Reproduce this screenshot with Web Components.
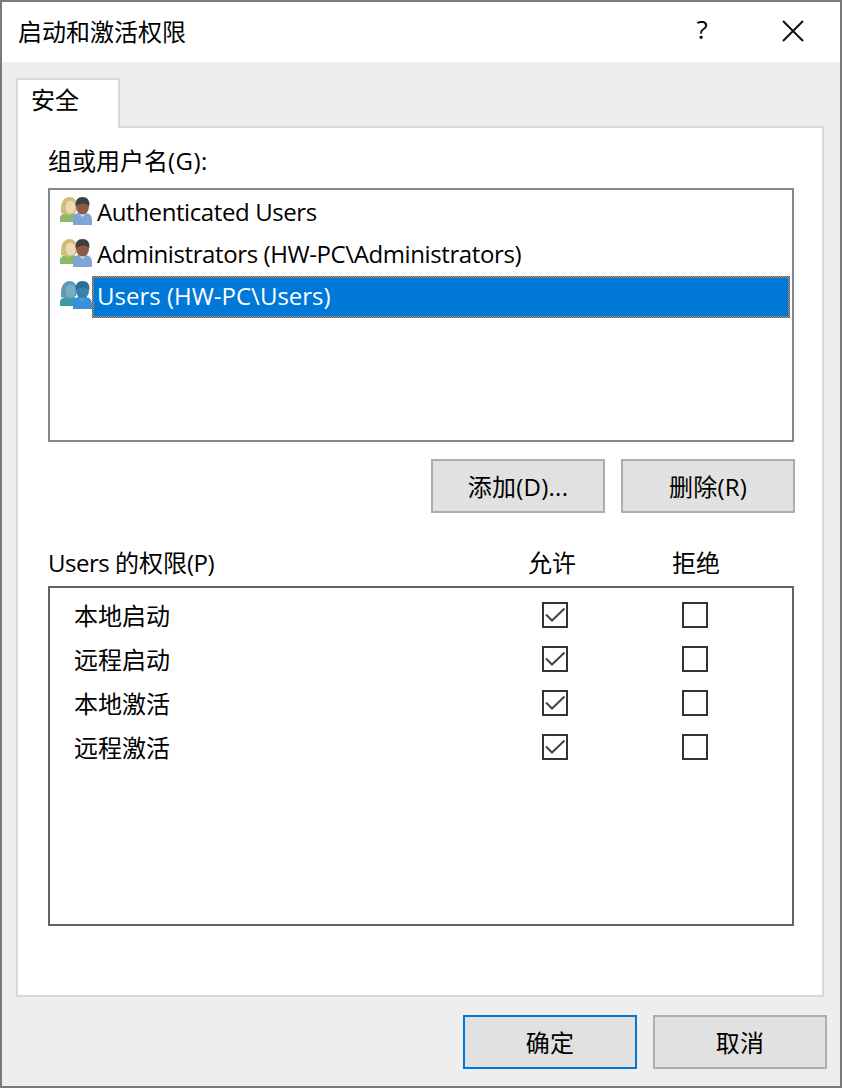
<!DOCTYPE html>
<html lang="zh-CN">
<head>
<meta charset="utf-8">
<title>启动和激活权限</title>
<style>
  html, body { margin: 0; height: 100%; background: #eee; }
  body { font: 24px/34px "Open Sans", "Noto Sans CJK SC", sans-serif; color: #000; }
</style>
</head>
<body>
<perm-dialog heading="启动和激活权限">
  <user-row kind="warm">Authenticated Users</user-row>
  <user-row kind="warm">Administrators (HW-PC\Administrators)</user-row>
  <user-row kind="cool" selected>Users (HW-PC\Users)</user-row>
  <perm-row slot="perms" checked>本地启动</perm-row>
  <perm-row slot="perms" checked>远程启动</perm-row>
  <perm-row slot="perms" checked>本地激活</perm-row>
  <perm-row slot="perms" checked>远程激活</perm-row>
</perm-dialog>

<script>
class WinButton extends HTMLElement {
  constructor() {
    super();
    this.attachShadow({ mode: 'open' });
    this.shadowRoot.innerHTML = `
      <style>
        :host {
          display: flex;
          align-items: center;
          justify-content: center;
          box-sizing: border-box;
          width: 174px;
          height: 54px;
          padding-top: 2px;
          background: #e1e1e1;
          border: 2px solid #adadad;
          letter-spacing: .25px;
        }
        :host([primary]) { border-color: #0078d7; }
      </style>
      <slot></slot>
    `;
  }
}

class CheckBox extends HTMLElement {
  constructor() {
    super();
    this.attachShadow({ mode: 'open' });
    const mark = this.hasAttribute('checked')
      ? '<svg width="22" height="22" viewBox="0 0 22 22"><path d="M2 10.5 L8 16.5 L20.5 4.5" fill="none" stroke="#444" stroke-width="2"/></svg>'
      : '';
    this.shadowRoot.innerHTML = `
      <style>
        :host {
          display: block;
          box-sizing: border-box;
          width: 26px;
          height: 26px;
          border: 2px solid #333;
          background: #fff;
        }
        svg { display: block; }
      </style>
      ${mark}
    `;
  }
}

class UserRow extends HTMLElement {
  constructor() {
    super();
    this.attachShadow({ mode: 'open' });
    const cool = this.getAttribute('kind') === 'cool';
    const c = cool
      ? { hairA: '#5f9cb4', faceA: '#79adc2', bodyA: '#3f9aa6', hairB: '#2c6d9c', faceB: '#3a80ab', bodyB: '#3b90da', collar: '#5aa6e0' }
      : { hairA: '#cfbd7c', faceA: '#ecd9b8', bodyA: '#8fb864', hairB: '#3f3f42', faceB: '#8a5d42', bodyB: '#7da6d4', collar: '#dfe9f3' };
    this.shadowRoot.innerHTML = `
      <style>
        :host { display: flex; align-items: center; height: 42px; padding-left: 2px; }
        svg.icon { flex: none; display: block; width: 32px; height: 28px; margin-bottom: 4px; filter: blur(.5px); }
        .label {
          flex: 1;
          position: relative;
          box-sizing: border-box;
          height: 42px;
          line-height: 36px;
          padding-left: 3px;
          margin-right: 2px;
          border: 2px solid transparent;
          white-space: nowrap;
          letter-spacing: -.4px;
        }
        :host([selected]) .label { color: #fff; background: #0078d7; background-clip: padding-box; letter-spacing: 0; }
        .focus { display: none; position: absolute; left: -2px; top: -2px; width: calc(100% + 4px); height: calc(100% + 4px); }
        :host([selected]) .focus { display: block; }
        .text { position: relative; }
      </style>
      <svg class="icon" viewBox="0 0 32 28">
        <path d="M0 25 V20 Q1 17 6 16 L13 16 Q18 17 18 21 V25 Z" fill="${c.bodyA}"/>
        <path d="M1 16 Q0 1 9 0 Q17 0 17 9 L16 15 L9 18 Z" fill="${c.hairA}"/>
        <ellipse cx="10.5" cy="10" rx="5" ry="6.5" fill="${c.faceA}"/>
        <path d="M13 28 V21 Q13 17 18 16 L26 16 Q32 17 32 23 V28 Z" fill="${c.bodyB}"/>
        <path d="M19 16 L22.5 20 L26 16 Z" fill="${c.collar}"/>
        <ellipse cx="22.5" cy="9.5" rx="6.5" ry="8" fill="${c.faceB}"/>
        <path d="M15.5 9 Q15 0 22.5 0 Q30 0 29.5 9 Q24 4 15.5 9 Z" fill="${c.hairB}"/>
      </svg>
      <span class="label">
        <svg class="focus" shape-rendering="crispEdges">
          <defs>
            <pattern id="dots" width="2" height="2" patternUnits="userSpaceOnUse">
              <rect width="2" height="2" fill="#0078d7"/>
              <rect width="1" height="1" fill="#f0801e"/>
              <rect x="1" y="1" width="1" height="1" fill="#f0801e"/>
            </pattern>
          </defs>
          <path fill="url(#dots)" fill-rule="evenodd" d="M0 0 H698 V42 H0 Z M2 2 V40 H696 V2 Z"/>
        </svg>
        <span class="text"><slot></slot></span>
      </span>
    `;
  }
}

class PermRow extends HTMLElement {
  constructor() {
    super();
    this.attachShadow({ mode: 'open' });
    const on = this.hasAttribute('checked') ? 'checked' : '';
    this.shadowRoot.innerHTML = `
      <style>
        :host { display: grid; grid-template-columns: 468px 140px 26px; align-items: center; height: 44px; padding-left: 24px; }
        span { position: relative; top: 1px; }
      </style>
      <span><slot></slot></span>
      <check-box ${on}></check-box>
      <check-box></check-box>
    `;
  }
}

class PermDialog extends HTMLElement {
  constructor() {
    super();
    this.attachShadow({ mode: 'open' });
    const heading = this.getAttribute('heading') || '';
    this.shadowRoot.innerHTML = `
      <style>
        :host {
          display: flex;
          flex-direction: column;
          box-sizing: border-box;
          width: 842px;
          height: 1088px;
          border: 2px solid #7a7a7a;
          background: #eee;
        }
        .titlebar { display: flex; align-items: center; flex: none; height: 60px; background: #fff; padding-left: 16px; }
        .titlebar .name { flex: 1; }
        .help { width: 20px; margin-right: 70px; text-align: center; font-size: 26px; position: relative; top: -3px; }
        .close { display: block; margin-right: 36px; position: relative; top: -1px; }
        .tabs { flex: none; display: flex; height: 50px; padding: 16px 0 0 14px; }
        .tab {
          box-sizing: border-box;
          width: 104px;
          height: 50px;
          padding: 3px 0 0 13px;
          background: #fff;
          border: 2px solid #d9d9d9;
          border-bottom: 0;
          position: relative;
          z-index: 1;
        }
        .panel {
          box-sizing: border-box;
          width: 808px;
          height: 871px;
          margin: -2px 0 0 14px;
          background: #fff;
          border: 2px solid #d9d9d9;
          padding: 16px 0 0 30px;
        }
        .group-label { height: 44px; }
        .group-label i, .perm-head i { font-style: normal; }
        .group-label i { letter-spacing: .5px; }
        .perm-head i { letter-spacing: -.5px; }
        .users { box-sizing: border-box; width: 746px; height: 254px; border: 2px solid #828790; padding: 2px 0 0 8px; }
        .actions { display: flex; justify-content: flex-end; gap: 16px; width: 747px; margin-top: 17px; }
        .perm-head { display: grid; grid-template-columns: 480px 144px 48px; width: 746px; height: 34px; margin-top: 33px; line-height: 34px; }
        .perms { box-sizing: border-box; width: 746px; height: 340px; margin-top: 6px; border: 2px solid #646464; padding-top: 5px; }
        .footer { display: flex; justify-content: flex-end; gap: 16px; padding: 18px 13px 0 0; }
      </style>
      <div class="titlebar">
        <span class="name">${heading}</span>
        <span class="help">?</span>
        <svg class="close" width="22" height="22" viewBox="0 0 22 22"><path d="M1 1 L21 21 M21 1 L1 21" stroke="#111" stroke-width="2" fill="none"/></svg>
      </div>
      <div class="tabs"><div class="tab">安全</div></div>
      <div class="panel">
        <div class="group-label">组或用户名<i>(G):</i></div>
        <div class="users"><slot></slot></div>
        <div class="actions">
          <win-button>添加(D)...</win-button>
          <win-button>删除(R)</win-button>
        </div>
        <div class="perm-head"><span><i>Users </i>的权限<i>(P)</i></span><span>允许</span><span>拒绝</span></div>
        <div class="perms"><slot name="perms"></slot></div>
      </div>
      <div class="footer">
        <win-button primary>确定</win-button>
        <win-button>取消</win-button>
      </div>
    `;
  }
}

customElements.define('win-button', WinButton);
customElements.define('check-box', CheckBox);
customElements.define('user-row', UserRow);
customElements.define('perm-row', PermRow);
customElements.define('perm-dialog', PermDialog);
</script>
</body>
</html>
